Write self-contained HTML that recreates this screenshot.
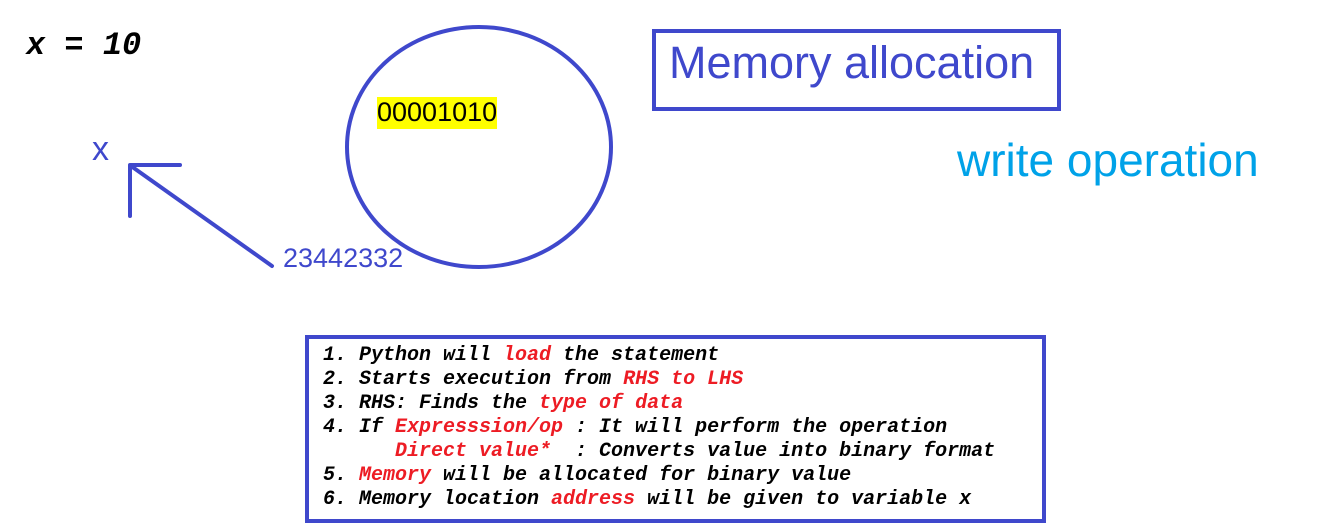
<!DOCTYPE html>
<html><head><style>
body{margin:0;width:1320px;height:527px;background:#fff;position:relative;overflow:hidden;font-family:"Liberation Sans",sans-serif}
.a{position:absolute;white-space:pre}
.box{position:absolute;left:305px;top:335px;width:733px;height:180px;border:4px solid #3f48cc;}
.code{position:absolute;left:323px;top:344px;font:italic bold 20px/24px "Liberation Mono",monospace;color:#000;white-space:pre}
.r{color:#ed1c24}
</style></head><body>
<div class="a" style="left:26px;top:27px;font:italic bold 32px 'Liberation Mono',monospace">x = 10</div>
<svg class="a" style="left:0;top:0" width="1320" height="527">
<ellipse cx="479" cy="147" rx="132" ry="120" fill="none" stroke="#3f48cc" stroke-width="4"/>
<g stroke="#3f48cc" stroke-width="4" stroke-linecap="round" fill="none">
<line x1="272" y1="266" x2="131" y2="166"/>
<line x1="130" y1="166" x2="130" y2="216"/>
<line x1="130" y1="165" x2="180" y2="165"/>
</g>
<rect x="654" y="31" width="405" height="78" fill="none" stroke="#3f48cc" stroke-width="4"/>
</svg>
<div class="a" style="left:92px;top:130px;font-size:34px;color:#3f48cc">x</div>
<div class="a" style="left:377px;top:97px;width:120px;height:32px;background:#ffff00"></div>
<div class="a" style="left:377px;top:97px;font-size:27px;line-height:31px">00001010</div>
<div class="a" style="left:283px;top:243px;font-size:27px;color:#3f48cc">23442332</div>
<div class="a" style="left:669px;top:37px;font-size:45px;color:#3f48cc">Memory allocation</div>
<div class="a" style="left:957px;top:133px;font-size:46px;color:#00a2e8">write operation</div>
<div class="box"></div>
<div class="code">1. Python will <span class="r">load</span> the statement
2. Starts execution from <span class="r">RHS to LHS</span>
3. RHS: Finds the <span class="r">type of data</span>
4. If <span class="r">Expresssion/op</span> : It will perform the operation
      <span class="r">Direct value*</span>  : Converts value into binary format
5. <span class="r">Memory</span> will be allocated for binary value
6. Memory location <span class="r">address</span> will be given to variable x</div>
</body></html>
